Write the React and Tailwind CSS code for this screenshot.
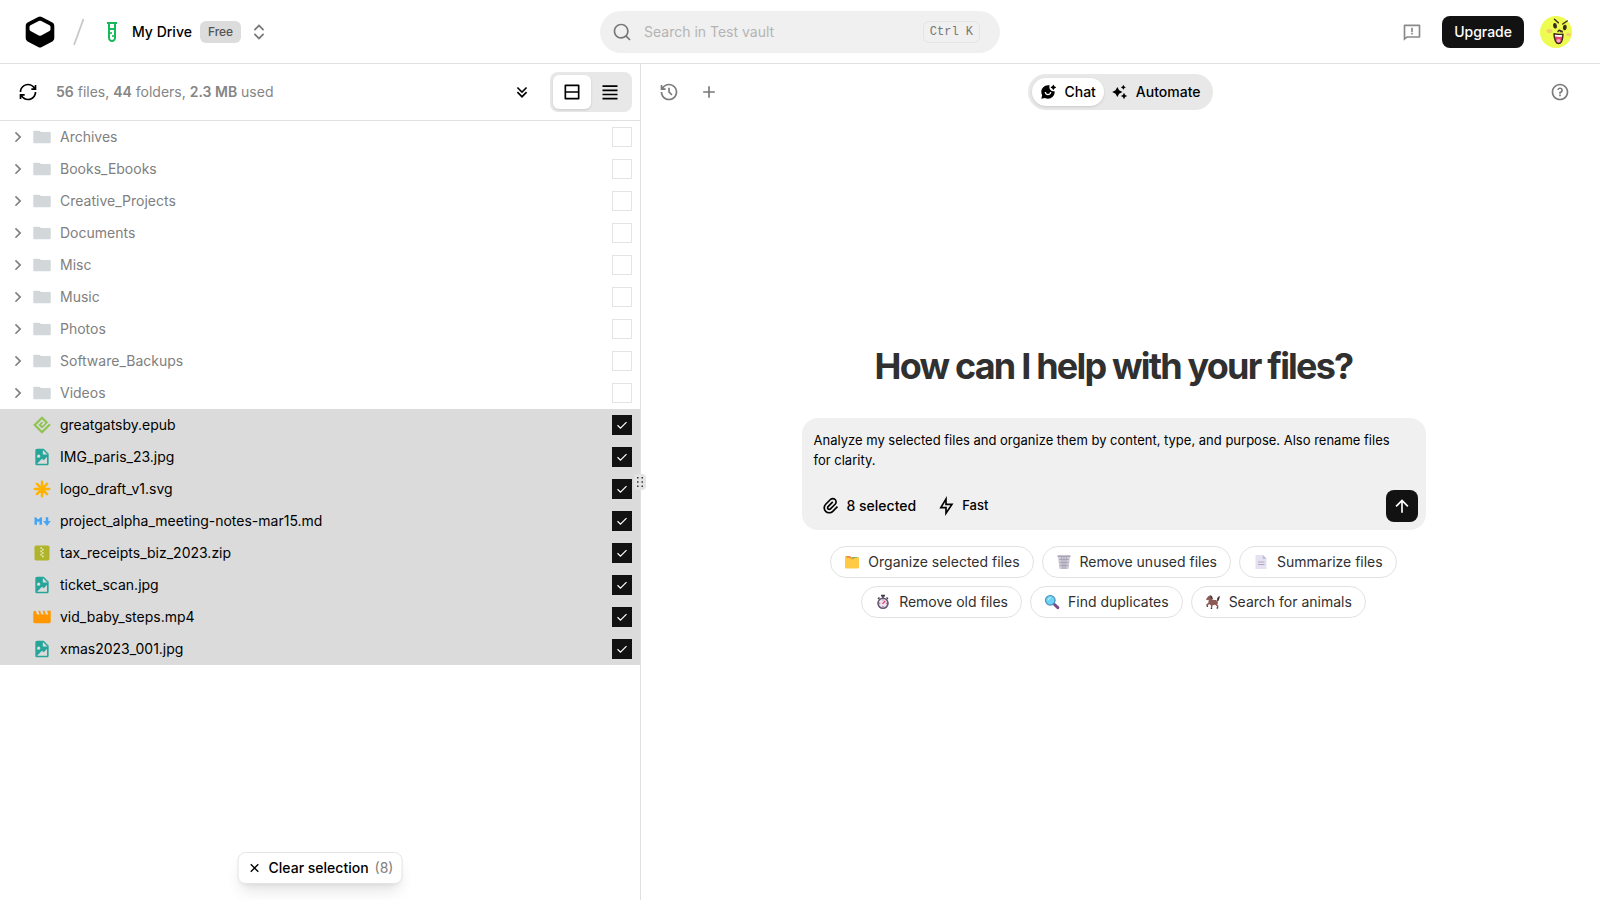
import {
  RiAddLine,
  RiAlignJustify,
  RiArrowDownDoubleLine,
  RiArrowRightSLine,
  RiArrowUpLine,
  RiAttachment2,
  RiChatSmileAiFill,
  RiCloseLine,
  RiExpandUpDownLine,
  RiFeedbackLine,
  RiFlashlightLine,
  RiHistoryLine,
  RiLayoutRowLine,
  RiLoopRightLine,
  RiQuestionLine,
  RiSearchLine,
  RiSparkling2Fill,
  RiTestTubeLine,
} from 'react-icons/ri';

const folders = [
  'Archives',
  'Books_Ebooks',
  'Creative_Projects',
  'Documents',
  'Misc',
  'Music',
  'Photos',
  'Software_Backups',
  'Videos',
];

const files = [
  { name: 'greatgatsby.epub', Icon: EpubIcon },
  { name: 'IMG_paris_23.jpg', Icon: ImageIcon },
  { name: 'logo_draft_v1.svg', Icon: SvgIcon },
  { name: 'project_alpha_meeting-notes-mar15.md', Icon: MarkdownIcon },
  { name: 'tax_receipts_biz_2023.zip', Icon: ZipIcon },
  { name: 'ticket_scan.jpg', Icon: ImageIcon },
  { name: 'vid_baby_steps.mp4', Icon: VideoIcon },
  { name: 'xmas2023_001.jpg', Icon: ImageIcon },
];

const suggestions = [
  { label: 'Organize selected files', Icon: DividersEmoji },
  { label: 'Remove unused files', Icon: BinEmoji },
  { label: 'Summarize files', Icon: PageEmoji },
  { label: 'Remove old files', Icon: StopwatchEmoji },
  { label: 'Find duplicates', Icon: LensEmoji },
  { label: 'Search for animals', Icon: HorseEmoji },
];

function Logo() {
  return (
    <svg viewBox="0 0 32 32" className="size-8">
      <path
        fillRule="evenodd"
        d="M14.2.9a3.6 3.6 0 0 1 3.6 0l10.6 5.700A3.600 3.600 0 0 1 30.300 9.800v12.400a3.600 3.600 0 0 1-1.900 3.200l-10.600 5.700a3.600 3.600 0 0 1-3.600 0L3.600 25.400a3.600 3.600 0 0 1-1.900-3.200V9.800a3.600 3.600 0 0 1 1.900-3.200zM14.800 5 6.500 9.300a1.800 1.800 0 0 0-1 1.600v2.400c0 .7.400 1.300 1 1.600l8.300 4.500a2.500 2.500 0 0 0 2.400 0l8.300-4.500c.6-.3 1-.9 1-1.600v-2.400c0-.7-.4-1.300-1-1.600L17.200 5a2.500 2.500 0 0 0-2.400 0z"
      />
    </svg>
  );
}

function Avatar() {
  return (
    <svg viewBox="0 0 32 32" className="size-8">
      <circle cx="16" cy="16" r="16" fill="#eefb50" />
      <ellipse cx="9.500" cy="15" rx="3" ry="2" fill="#f5cd6a" />
      <ellipse cx="28.500" cy="18.500" rx="2.500" ry="1.800" fill="#f5cd6a" />
      <g fill="none" stroke="#3a2a1c" strokeWidth="1.500" strokeLinecap="round">
        <path d="M14.500 3.300 18.300 6.800M22.800 8l4.400-3M18 15.500c.8-1.500 2-1.500 2.400-.2.800-.8 1.600-.3 1.800.7" />
      </g>
      <ellipse cx="15" cy="9.800" rx="1.900" ry="2.800" fill="#3a2a1c" transform="rotate(-12 15 9.800)" />
      <ellipse cx="24.800" cy="11.500" rx="1.900" ry="2.800" fill="#3a2a1c" transform="rotate(12 24.800 11.500)" />
      <path
        d="M14 17.800c3 .6 6 .8 9 .4-.2 5-1.800 9.400-4.500 9.400S14 22.500 14 17.800z"
        fill="#e0446f"
        stroke="#3a2a1c"
        strokeWidth="1.400"
        strokeLinejoin="round"
      />
      <path d="M15 18.700c2.500.4 4.800.5 7 .3l-.2 1.800c-2.200.2-4.400.1-6.700-.3z" fill="#fff" />
      <ellipse cx="18.500" cy="24.800" rx="2.100" ry="1.700" fill="#f9a6c0" />
    </svg>
  );
}

function FolderIcon() {
  return (
    <svg viewBox="0 0 32 32" className="size-5" fill="#d2d8d9">
      <path d="m13.844 7.536-1.288-1.072A2 2 0 0 0 11.276 6H4a2 2 0 0 0-2 2v16a2 2 0 0 0 2 2h24a2 2 0 0 0 2-2V10a2 2 0 0 0-2-2H15.124a2 2 0 0 1-1.280-.464" />
    </svg>
  );
}

function EpubIcon() {
  return (
    <svg viewBox="0 0 24 24" className="size-5">
      <path d="M12 2 22 12 12 22 2 12z" fill="#8bc34a" stroke="#8bc34a" strokeLinejoin="round" />
      <path d="m11.500 12.500 3.300-3.300L12 6.400 6.400 12l5.600 5.600L22.500 7.100" fill="none" stroke="#dbdbdb" strokeWidth="2" />
    </svg>
  );
}

function ImageIcon() {
  return (
    <svg viewBox="0 0 24 24" className="size-5" fill="#26a69a">
      <path d="M13 9h5.500L13 3.500zM6 2h8l6 6v12a2 2 0 0 1-2 2H6a2 2 0 0 1-2-2V4c0-1.110.890-2 2-2m0 18h12v-8l-4 4-2-2zM8 9a2 2 0 0 0-2 2 2 2 0 0 0 2 2 2 2 0 0 0 2-2 2 2 0 0 0-2-2" />
    </svg>
  );
}

function SvgIcon() {
  return (
    <svg viewBox="0 0 24 24" className="size-5" fill="none" stroke="#ffb300" strokeWidth="3" strokeLinecap="round">
      <path d="M12 3.300v17.400M3.300 12h17.400M5.900 5.900l12.200 12.200M18.100 5.900 5.900 18.100" />
    </svg>
  );
}

function MarkdownIcon() {
  return (
    <svg viewBox="0 0 32 32" className="size-5" fill="#42a5f5">
      <path d="m14 10-4 3.500L6 10H4v12h4v-6l2 2 2-2v6h4V10zm12 6v-6h-4v6h-4l6 8 6-8z" />
    </svg>
  );
}

function ZipIcon() {
  return (
    <svg viewBox="0 0 24 24" className="size-5">
      <rect x="3" y="3" width="18" height="18" rx="2" fill="#afb42b" />
      <path d="M10 5h2v2h-2zM12 7h2v2h-2zM10 9h2v2h-2zM12 11h2v2h-2zM10 13h2v2h-2zM12 15h2v2h-2z" fill="#e4e6bd" />
    </svg>
  );
}

function VideoIcon() {
  return (
    <svg viewBox="0 0 32 32" className="size-5" fill="#ff9800">
      <path d="m24 6 2 6h-4l-2-6h-3l2 6h-4l-2-6h-3l2 6H8L6 6H5a3 3 0 0 0-3 3v14a3 3 0 0 0 3 3h22a3 3 0 0 0 3-3V6Z" />
    </svg>
  );
}

function DividersEmoji() {
  return (
    <svg viewBox="0 0 16 16" className="size-4">
      <path d="M1.500 2h4l1 1.200h8V8h-13z" fill="#f0a93a" />
      <path d="M3 2.500h4v1.300H3z" fill="#f2774d" />
      <path d="M8 3.200h5v1.200H8z" fill="#5fae5c" />
      <path d="M1 3.800h4.500L7 5.200h2.500l1.200-1.400H15V13.500a1 1 0 0 1-1 1H2a1 1 0 0 1-1-1z" fill="#ffcb45" />
    </svg>
  );
}

function BinEmoji() {
  return (
    <svg viewBox="0 0 16 16" className="size-4">
      <path d="M2 2.500h12L12.600 15H3.400z" fill="#cfccd8" />
      <path d="M3 5.500h10M3.300 8.500h9.400M3.600 11.500h8.800M5.500 3l1 12M8 3v12M10.500 3l-1 12" stroke="#9994a6" strokeWidth=".6" />
      <path d="M1.500 1.300h13v1.700h-13z" fill="#aba6b8" />
    </svg>
  );
}

function PageEmoji() {
  return (
    <svg viewBox="0 0 16 16" className="size-4">
      <path d="M2.500 1h7.300L13.500 4.700V15h-11z" fill="#e6e1f0" />
      <path d="M9.800 1v3.700h3.700z" fill="#bdb4d0" />
      <path d="M5 8h6.500M5 10.500h6.500" stroke="#b0a8c6" />
    </svg>
  );
}

function StopwatchEmoji() {
  return (
    <svg viewBox="0 0 16 16" className="size-4">
      <path d="M6 .8h4v1.600H6zM7.200 2h1.600v2H7.200zM12 3l1.500 1.500-1 1L11 4zM4 3 2.500 4.500l1 1L5 4z" fill="#433b4d" />
      <circle cx="8" cy="9.300" r="5" fill="#efe2f2" stroke="#65566f" strokeWidth="1.600" />
      <path d="m7.500 9.800 2.800-3" stroke="#e0365f" strokeWidth="1.200" />
      <path d="M8 5.500v1M8 12v1M4.200 9.300h1M10.800 9.300h1" stroke="#65566f" />
    </svg>
  );
}

function LensEmoji() {
  return (
    <svg viewBox="0 0 16 16" className="size-4">
      <path d="m10.500 10.500 3.300 3.100" stroke="#7b4a86" strokeWidth="3" strokeLinecap="round" />
      <circle cx="6.300" cy="6.300" r="4.800" fill="#6fd3f5" stroke="#4a8fb8" strokeWidth="1.200" />
      <path d="M4 6a2.500 2.500 0 0 1 2.500-2.300" fill="none" stroke="#c9f1ff" strokeLinecap="round" />
    </svg>
  );
}

function HorseEmoji() {
  return (
    <svg viewBox="0 0 16 16" className="size-4">
      <path
        d="M1 5.200 3.300 2.200l1.700-.8.600 1.200 1.600 3.200 3.600.3 1.700.9.400 2-.7 1.500 1.300 1.500-.4 2.500h-1.200l.2-2-2-1.700-2.500.4-.6 3.300H5.800l.2-3-1.300-1.300-2 .8.400 1.700-1.100.2-.9-2.400 2.300-1.700.3-3L2 6.300z"
        fill="#8d5a53"
      />
      <path d="M4.800 1.200c2 0 3 2 3.300 4.400L6 4.600zM12 6.800c-.2-3 1-4.600 3.200-4.500-1 1-.5 3-2 5z" fill="#4b3438" />
      <path d="M5.800 14.500h1.400M11.500 14h1.400M1.700 12.200h1.400" stroke="#3a2b31" />
    </svg>
  );
}

function RowCheckbox({ name, checked }) {
  return (
    <span className="grid size-5 place-items-center">
      <input
        type="checkbox"
        aria-label={`Select ${name}`}
        defaultChecked={checked}
        className="peer col-start-1 row-start-1 size-5 appearance-none border border-[#e4e4e4] bg-white checked:border-[#121212] checked:bg-[#121212]"
      />
      <svg
        viewBox="0 0 16 16"
        className="pointer-events-none col-start-1 row-start-1 hidden size-4 peer-checked:block"
        fill="none"
        stroke="#fff"
        strokeWidth="1.200"
      >
        <path d="m3.500 8.200 3 2.900 6-6" />
      </svg>
    </span>
  );
}

function Header() {
  return (
    <header className="grid h-16 grid-cols-[1fr_minmax(0,400px)_1fr] items-center border-b border-[#e0e0e0] px-7">
      <div className="flex items-center">
        <a href="#home" aria-label="Home" className="-ml-1">
          <Logo />
        </a>
        <svg viewBox="0 0 12 28" className="mx-4 h-7 w-3" fill="none" stroke="#c8c8c8" strokeWidth="1.800">
          <path d="M11.500 1 2 27" />
        </svg>
        <button type="button" className="flex items-center gap-2">
          <RiTestTubeLine className="size-6 text-[#17b857]" />
          <span className="text-sm font-medium">My Drive</span>
          <span className="rounded-md bg-[#dcdcdc] px-2 py-[3px] text-xs font-medium text-[#555]">Free</span>
          <RiExpandUpDownLine className="size-5 text-[#777]" />
        </button>
      </div>

      <label className="flex h-[42px] items-center gap-3 rounded-full bg-[#f0f0f0] pr-5 pl-3">
        <RiSearchLine className="size-5 text-[#777]" />
        <input
          type="search"
          aria-label="Search"
          placeholder="Search in Test vault"
          className="min-w-0 flex-1 bg-transparent text-sm outline-none placeholder:text-[#b4b4b4]"
        />
        <kbd className="rounded-md border border-[#e4e4e4] px-1.5 py-0.5 font-['Liberation_Mono',monospace] text-xs leading-4 font-medium text-[#777]">
          Ctrl K
        </kbd>
      </label>

      <div className="flex items-center justify-end">
        <button type="button" aria-label="Feedback" className="mr-5 text-[#8a8a8a]">
          <RiFeedbackLine className="size-5" />
        </button>
        <button type="button" className="mr-4 h-8 rounded-lg bg-[#121212] px-3 text-sm font-medium text-white">
          Upgrade
        </button>
        <button type="button" aria-label="Account">
          <Avatar />
        </button>
      </div>
    </header>
  );
}

function FilePanel() {
  return (
    <section className="relative w-2/5 shrink-0">
      <div className="flex h-[57px] items-center border-b border-[#e0e0e0] pr-2 pl-[18px]">
        <button type="button" aria-label="Sync">
          <RiLoopRightLine className="size-5" />
        </button>
        <p className="ml-[18px] flex-1 text-sm text-[#858585]">
          <b className="font-semibold">56</b> files, <b className="font-semibold">44</b> folders,{' '}
          <b className="font-semibold">2.3 MB</b> used
        </p>
        <button type="button" aria-label="Collapse all" className="mr-[18px]">
          <RiArrowDownDoubleLine className="size-5" />
        </button>
        <div className="flex h-10 rounded-lg bg-[#e8e8e8] p-[3px]">
          <button
            type="button"
            aria-label="Row view"
            className="flex w-[38px] items-center justify-center rounded-md bg-white shadow-sm"
          >
            <RiLayoutRowLine className="size-5" />
          </button>
          <button type="button" aria-label="List view" className="flex w-[38px] items-center justify-center">
            <RiAlignJustify className="size-5" />
          </button>
        </div>
      </div>

      <ul className="text-sm">
        {folders.map((name) => (
          <li key={name} className="flex h-8 items-center px-2 text-[#808080]">
            <button type="button" aria-label={`Expand ${name}`} className="mr-1">
              <RiArrowRightSLine className="size-5" />
            </button>
            <FolderIcon />
            <span className="ml-2 flex-1">{name}</span>
            <RowCheckbox name={name} />
          </li>
        ))}
        {files.map(({ name, Icon }) => (
          <li key={name} className="flex h-8 items-center bg-[#dbdbdb] pr-2 pl-8">
            <Icon />
            <span className="ml-2 flex-1">{name}</span>
            <RowCheckbox name={name} checked />
          </li>
        ))}
      </ul>

      <button
        type="button"
        className="absolute bottom-4 left-1/2 flex h-8 -translate-x-1/2 items-center gap-1.5 rounded-lg border border-[#e4e4e4] bg-white px-2 text-sm font-medium whitespace-nowrap shadow-lg"
      >
        <RiCloseLine className="size-4" />
        Clear selection
        <span className="font-normal text-[#808080]">(8)</span>
      </button>
    </section>
  );
}

function Divider() {
  return (
    <div className="relative w-px shrink-0 bg-[#e0e0e0]">
      <div className="absolute top-1/2 left-0 z-10 flex h-4 w-3 -translate-1/2 items-center justify-center rounded-sm bg-[#e4e4e4]">
        <svg viewBox="0 0 6 10" className="h-2.5 w-1.5" fill="#333">
          <path d="M0 0h1.500v1.500H0zM4.500 0H6v1.500H4.500zM0 4.200h1.500v1.500H0zM4.500 4.200H6v1.500H4.500zM0 8.500h1.500V10H0zM4.500 8.500H6V10H4.500z" />
        </svg>
      </div>
    </div>
  );
}

function Composer() {
  return (
    <form className="rounded-2xl bg-[#f0f0f0]" onSubmit={(e) => e.preventDefault()}>
      <textarea
        aria-label="Message"
        rows={2}
        defaultValue="Analyze my selected files and organize them by content, type, and purpose. Also rename files for clarity."
        className="block w-full resize-none overflow-hidden bg-transparent pt-3 pr-6 pl-3 text-[13px] leading-5 outline-none"
      />
      <div className="flex items-center pt-5 pr-2 pb-2 pl-[19px]">
        <button type="button" className="flex items-center gap-1.5 text-sm font-medium">
          <RiAttachment2 className="size-5" />8 selected
        </button>
        <button type="button" className="ml-5 flex items-center gap-1.5 text-[13px] font-medium">
          <RiFlashlightLine className="size-5" />
          Fast
        </button>
        <button
          type="submit"
          aria-label="Send"
          className="ml-auto flex size-8 items-center justify-center rounded-lg bg-[#121212] text-white"
        >
          <RiArrowUpLine className="size-5" />
        </button>
      </div>
    </form>
  );
}

function ChatPanel() {
  return (
    <main className="flex min-w-0 flex-1 flex-col">
      <div className="grid h-14 grid-cols-[1fr_auto_1fr] items-center">
        <div className="flex gap-5 pl-[18px] text-[#7a7a7a]">
          <button type="button" aria-label="History">
            <RiHistoryLine className="size-5" />
          </button>
          <button type="button" aria-label="New chat">
            <RiAddLine className="size-5" />
          </button>
        </div>
        <div className="flex h-9 rounded-full bg-[#e8e8e8] p-1 text-sm font-medium">
          <button type="button" className="flex items-center gap-2 rounded-full bg-white px-2 shadow-sm">
            <RiChatSmileAiFill className="size-4" />
            Chat
          </button>
          <button type="button" className="flex items-center gap-2 rounded-full px-2">
            <RiSparkling2Fill className="size-4" />
            Automate
          </button>
        </div>
        <button type="button" aria-label="Help" className="mr-[30px] justify-self-end text-[#7a7a7a]">
          <RiQuestionLine className="size-5" />
        </button>
      </div>

      <div className="flex flex-1 flex-col items-center justify-center pr-3.5 pb-14">
        <h1 className="text-4xl leading-10 font-bold tracking-tighter text-[#303030]">
          How can I help with your files?
        </h1>
        <div className="mt-8 w-full max-w-[624px]">
          <Composer />
          <div className="mt-4 flex flex-wrap justify-center gap-2">
            {suggestions.map(({ label, Icon }) => (
              <button
                key={label}
                type="button"
                className="flex h-8 items-center gap-2 rounded-full border border-[#e2e2e2] px-[13px] text-sm text-[#303030]"
              >
                <Icon />
                {label}
              </button>
            ))}
          </div>
        </div>
      </div>
    </main>
  );
}

export default function App() {
  return (
    <div className="flex min-h-screen flex-col bg-white font-['Inter',sans-serif] text-black">
      <Header />
      <div className="flex flex-1">
        <FilePanel />
        <Divider />
        <ChatPanel />
      </div>
    </div>
  );
}
